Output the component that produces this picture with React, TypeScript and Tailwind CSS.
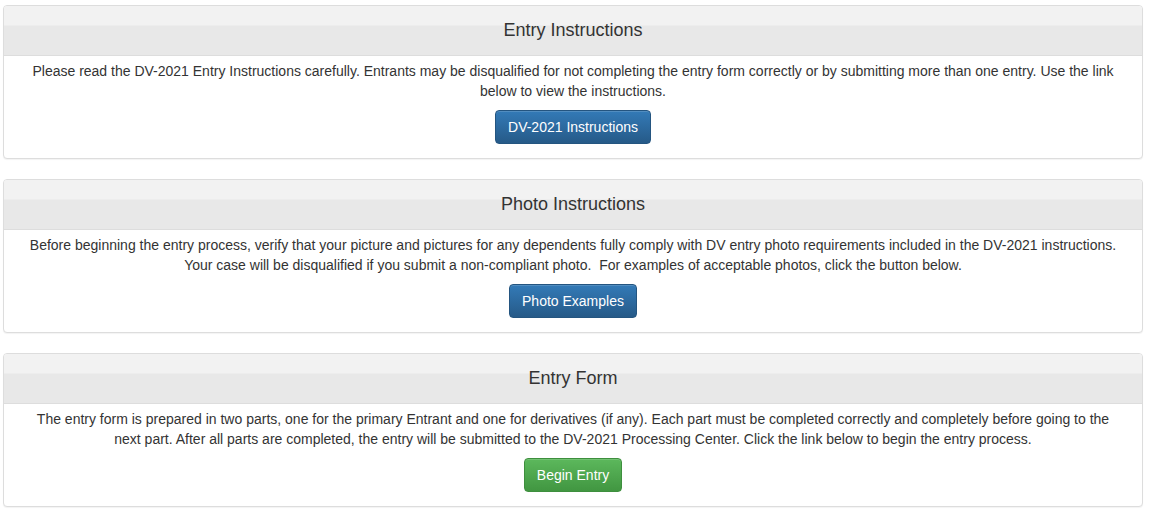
import React from "react";

const panels = [
  {
    title: "Entry Instructions",
    text: "Please read the DV-2021 Entry Instructions carefully. Entrants may be disqualified for not completing the entry form correctly or by submitting more than one entry. Use the link below to view the instructions.",
    button: "DV-2021 Instructions",
    kind: "primary",
  },
  {
    title: "Photo Instructions",
    text: "Before beginning the entry process, verify that your picture and pictures for any dependents fully comply with DV entry photo requirements included in the DV-2021 instructions. Your case will be disqualified if you submit a non-compliant photo.\u00a0 For examples of acceptable photos, click the button below.",
    button: "Photo Examples",
    kind: "primary",
  },
  {
    title: "Entry Form",
    text: "The entry form is prepared in two parts, one for the primary Entrant and one for derivatives (if any). Each part must be completed correctly and completely before going to the next part. After all parts are completed, the entry will be submitted to the DV-2021 Processing Center. Click the link below to begin the entry process.",
    button: "Begin Entry",
    kind: "success",
  },
];

export default function App() {
  return (
    <div className="min-h-[517px] bg-white pt-[5px] pl-[3px] font-['Liberation_Sans',Arial,sans-serif] text-[#333]">
      <div className="flex w-[1140px] flex-col gap-[20px]">
        {panels.map((p) => (
          <div
            key={p.title}
            className="overflow-hidden rounded-[4px] border border-[#ddd] bg-white shadow-[0_1px_1px_rgba(0,0,0,0.05)]"
          >
            {/* HEADER */}
            <div className="flex h-[50px] items-center justify-center border-b border-[#ddd] bg-[linear-gradient(to_bottom,#f2f2f2_0px,#f2f2f2_19px,#e8e8e8_20px,#e8e8e8_100%)] pb-[2px]">
              <h3 className="text-[18px] leading-[20px] text-[#333]">{p.title}</h3>
            </div>

            {/* BODY */}
            <div className="flex flex-col items-center px-[22px] pt-[5px] pb-[14px] text-center text-[14px] leading-[20px]">
              <p>{p.text}</p>
              <button
                className={
                  p.kind === "primary"
                    ? "mt-[9px] h-[34px] rounded-[4px] border border-[#245580] bg-[linear-gradient(to_bottom,#337ab7,#265a88)] px-[12px] text-[14px] text-white shadow-[inset_0_1px_0_rgba(255,255,255,0.15)]"
                    : "mt-[9px] h-[34px] rounded-[4px] border border-[#3e8f3e] bg-[linear-gradient(to_bottom,#5cb85c,#419641)] px-[12px] text-[14px] text-white shadow-[inset_0_1px_0_rgba(255,255,255,0.15)]"
                }
              >
                {p.button}
              </button>
            </div>
          </div>
        ))}
      </div>
    </div>
  );
}
